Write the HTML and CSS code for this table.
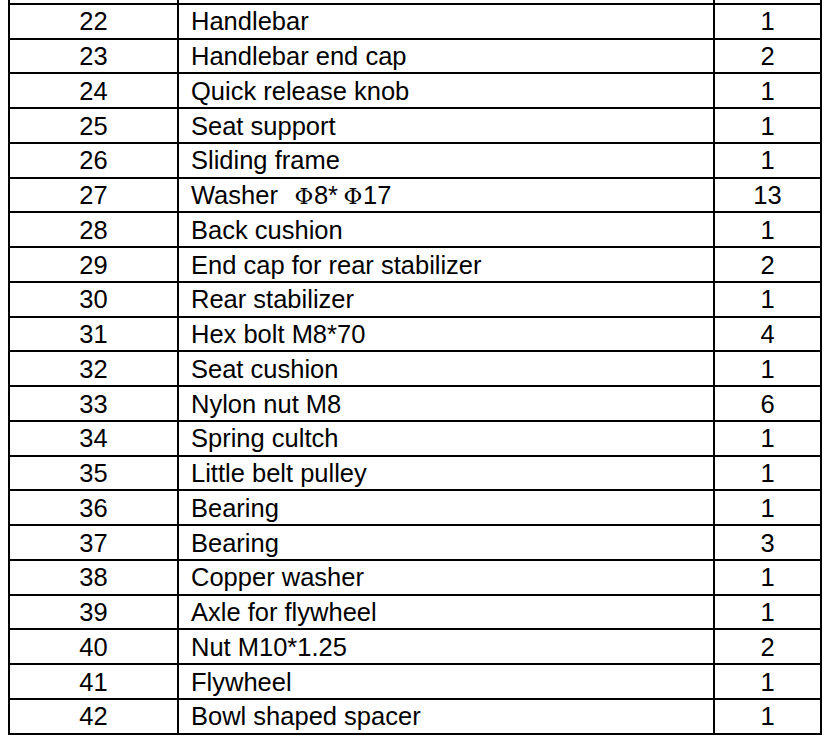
FILE: index.html
```html
<!DOCTYPE html>
<html>
<head>
<meta charset="utf-8">
<link rel="stylesheet" href="styles.css">
</head>
<body>
<table class="parts">
<colgroup><col class="c-no"><col class="c-name"><col class="c-qty"></colgroup>
<tbody>
<tr class="cut"><td></td><td></td><td></td></tr>
<tr><td class="no">22</td><td class="name">Handlebar</td><td class="qty">1</td></tr>
<tr><td class="no">23</td><td class="name">Handlebar end cap</td><td class="qty">2</td></tr>
<tr><td class="no">24</td><td class="name">Quick release knob</td><td class="qty">1</td></tr>
<tr><td class="no">25</td><td class="name">Seat support</td><td class="qty">1</td></tr>
<tr><td class="no">26</td><td class="name">Sliding frame</td><td class="qty">1</td></tr>
<tr><td class="no">27</td><td class="name">Washer<span class="phi first">Φ</span>8*<span class="phi second">Φ</span>17</td><td class="qty">13</td></tr>
<tr><td class="no">28</td><td class="name">Back cushion</td><td class="qty">1</td></tr>
<tr><td class="no">29</td><td class="name">End cap for rear stabilizer</td><td class="qty">2</td></tr>
<tr><td class="no">30</td><td class="name">Rear stabilizer</td><td class="qty">1</td></tr>
<tr><td class="no">31</td><td class="name">Hex bolt M8*70</td><td class="qty">4</td></tr>
<tr><td class="no">32</td><td class="name">Seat cushion</td><td class="qty">1</td></tr>
<tr><td class="no">33</td><td class="name">Nylon nut M8</td><td class="qty">6</td></tr>
<tr><td class="no">34</td><td class="name">Spring cultch</td><td class="qty">1</td></tr>
<tr><td class="no">35</td><td class="name">Little belt pulley</td><td class="qty">1</td></tr>
<tr><td class="no">36</td><td class="name">Bearing</td><td class="qty">1</td></tr>
<tr><td class="no">37</td><td class="name">Bearing</td><td class="qty">3</td></tr>
<tr><td class="no">38</td><td class="name">Copper washer</td><td class="qty">1</td></tr>
<tr><td class="no">39</td><td class="name">Axle for flywheel</td><td class="qty">1</td></tr>
<tr><td class="no">40</td><td class="name">Nut M10*1.25</td><td class="qty">2</td></tr>
<tr><td class="no">41</td><td class="name">Flywheel</td><td class="qty">1</td></tr>
<tr><td class="no">42</td><td class="name">Bowl shaped spacer</td><td class="qty">1</td></tr>
</tbody>
</table>
</body>
</html>
```
FILE: styles.css
```css
html, body {
  margin: 0;
  padding: 0;
  background: #fff;
}
body {
  font-family: "Liberation Sans", Arial, sans-serif;
  color: #000;
  overflow: hidden;
}
.parts {
  border-collapse: collapse;
  table-layout: fixed;
  width: 812px;
  margin: -32px 0 0 8px;
  font-size: 25.5px;
}
.c-no { width: 169px; }
.c-name { width: 536px; }
.c-qty { width: 107px; }
.parts td {
  border: 2px solid #000;
  height: 34.75px;
  padding: 2px 0 0 0;
  line-height: 1;
  vertical-align: middle;
  box-sizing: border-box;
}
.parts td.no, .parts td.qty {
  text-align: center;
}
.parts td.name {
  padding-left: 12px;
}
.phi {
  display: inline-block;
  font-family: "DejaVu Serif", serif;
  font-size: 23px;
  width: 20px;
  text-align: center;
}
.phi.first {
  margin-left: 16px;
}
.phi.second {
  margin-left: 5px;
}
```
